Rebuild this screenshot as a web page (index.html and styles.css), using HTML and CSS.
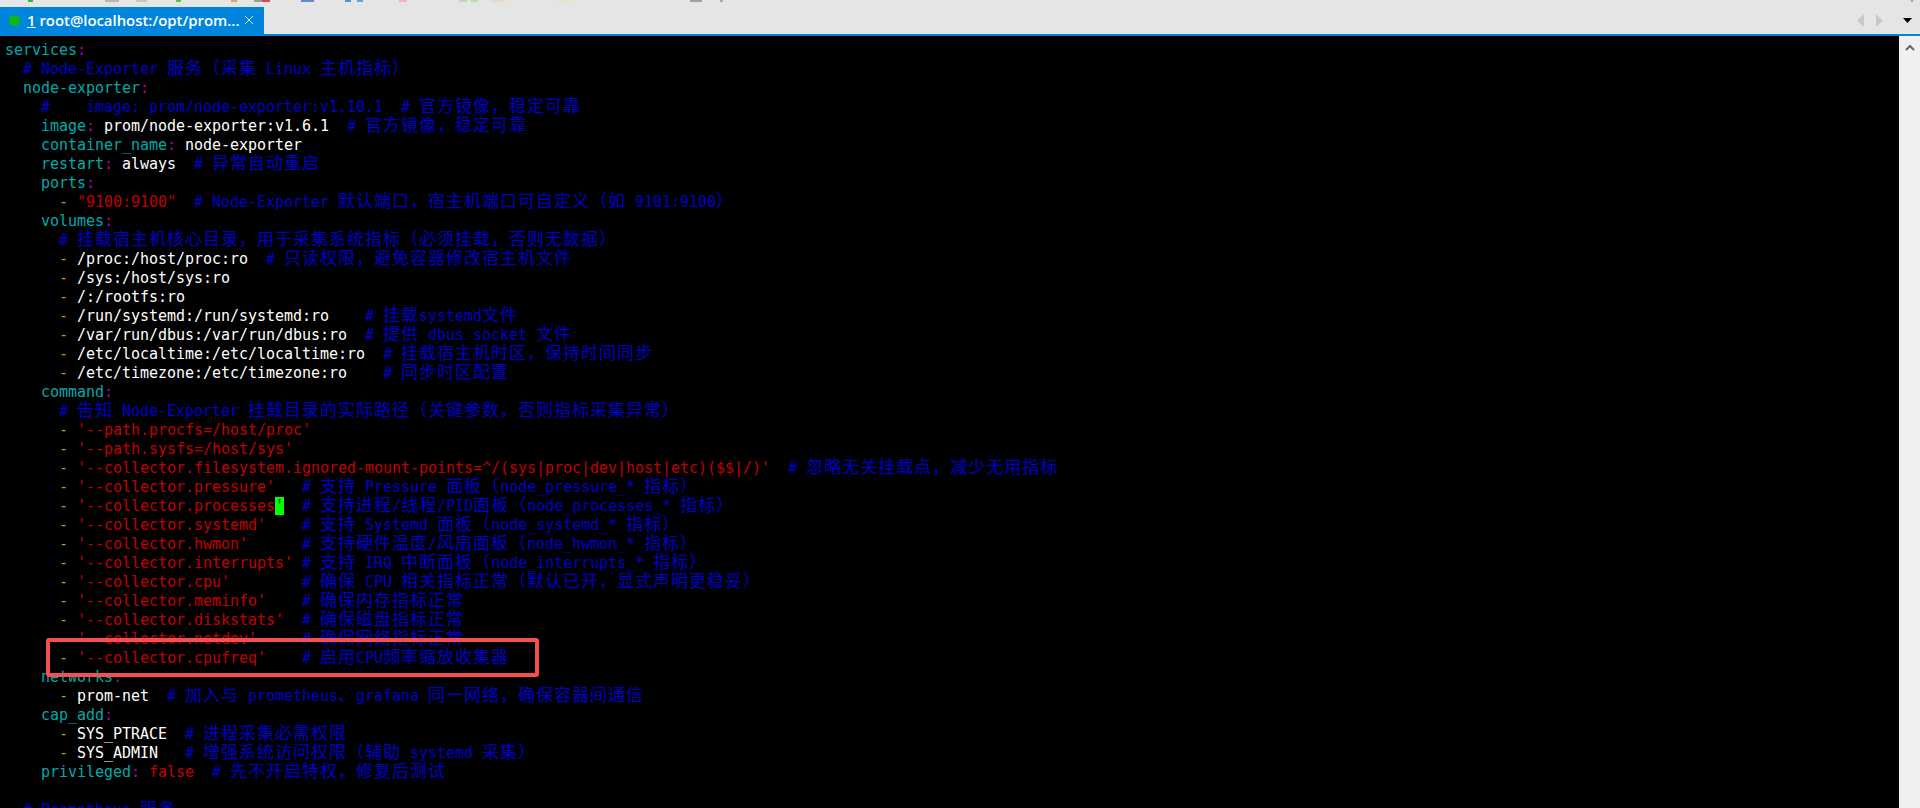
FILE: index.html
```html
<!DOCTYPE html>
<html lang="zh-CN">
<head>
<meta charset="utf-8">
<title>root@localhost:/opt/prometheus</title>
<link rel="stylesheet" href="styles.css">
</head>
<body>
<div class="app">
  <header class="tabbar">
    <svg class="strip" width="1920" height="2" viewBox="0 0 1920 2" aria-hidden="true">
      <rect x="28" width="5" height="2" fill="#35b535"/>
      <rect x="105" width="14" height="2" fill="#b5b5b5"/>
      <rect x="136" width="11" height="2" fill="#c4c4c4"/>
      <rect x="176" width="5" height="2" fill="#5cc04c"/>
      <rect x="231" width="6" height="2" fill="#e2a468"/>
      <rect x="254" width="8" height="2" fill="#9a9a9a"/>
      <rect x="262" width="8" height="2" fill="#d9484c"/>
      <rect x="301" width="13" height="2" fill="#5b8ed0"/>
      <rect x="345" width="6" height="2" fill="#4f92dc"/>
      <rect x="357" width="6" height="2" fill="#6a9edc"/>
      <rect x="399" width="8" height="2" fill="#ecb8b8"/>
      <rect x="459" width="8" height="2" fill="#b4dcb0"/>
      <rect x="471" width="7" height="2" fill="#bcdcb4"/>
      <rect x="490" width="15" height="2" fill="#ecd8c0"/>
      <rect x="554" width="15" height="2" fill="#f0e0c4"/>
      <rect x="690" width="12" height="2" fill="#9aa4b0"/>
      <rect x="720" width="3" height="2" fill="#a8a8b0"/>
      <rect x="1911" width="2" height="2" fill="#a0a0a0"/>
    </svg>
    <div class="tab">
      <span class="dot"></span>
      <span class="tab-title"><u>1</u> root@localhost:/opt/prom...</span>
      <svg class="tab-close" width="10" height="10" viewBox="0 0 10 10" aria-hidden="true"><path d="M1 1l8 8M9 1l-8 8" stroke="#d6ecfa" stroke-width="1" fill="none"/></svg>
    </div>
    <div class="tab-tools">
      <svg width="8" height="13" viewBox="0 0 8 13" aria-hidden="true"><path d="M7 0v13L0 6.5z" fill="#c8c8c8"/></svg>
      <svg width="8" height="13" viewBox="0 0 8 13" aria-hidden="true"><path d="M1 0v13l7-6.500z" fill="#c8c8c8"/></svg>
      <svg class="tool-menu" width="9" height="5" viewBox="0 0 9 5" aria-hidden="true"><path d="M0 0h9L4.500 5z" fill="#000"/></svg>
    </div>
  </header>
  <main class="body">
    <section class="term">
<div class="line"><span class="k">services</span><span class="c">:</span></div>
<div class="line">  <span class="m"># Node-Exporter <span class="z">服务（采集</span> Linux <span class="z">主机指标）</span></span></div>
<div class="line">  <span class="k">node-exporter</span><span class="c">:</span></div>
<div class="line">    <span class="m">#    image: prom/node-exporter:v1.10.1  # <span class="z">官方镜像，稳定可靠</span></span></div>
<div class="line">    <span class="k">image</span><span class="c">:</span> prom/node-exporter:v1.6.1  <span class="m"># <span class="z">官方镜像，稳定可靠</span></span></div>
<div class="line">    <span class="k">container_name</span><span class="c">:</span> node-exporter</div>
<div class="line">    <span class="k">restart</span><span class="c">:</span> always  <span class="m"># <span class="z">异常自动重启</span></span></div>
<div class="line">    <span class="k">ports</span><span class="c">:</span></div>
<div class="line">      <span class="d">-</span> <span class="s">"9100:9100"</span>  <span class="m"># Node-Exporter <span class="z">默认端口，宿主机端口可自定义（如</span> 9101:9100<span class="z">）</span></span></div>
<div class="line">    <span class="k">volumes</span><span class="c">:</span></div>
<div class="line">      <span class="m"># <span class="z">挂载宿主机核心目录，用于采集系统指标（必须挂载，否则无数据）</span></span></div>
<div class="line">      <span class="d">-</span> /proc:/host/proc:ro  <span class="m"># <span class="z">只读权限，避免容器修改宿主机文件</span></span></div>
<div class="line">      <span class="d">-</span> /sys:/host/sys:ro</div>
<div class="line">      <span class="d">-</span> /:/rootfs:ro</div>
<div class="line">      <span class="d">-</span> /run/systemd:/run/systemd:ro    <span class="m"># <span class="z">挂载</span>systemd<span class="z">文件</span></span></div>
<div class="line">      <span class="d">-</span> /var/run/dbus:/var/run/dbus:ro  <span class="m"># <span class="z">提供</span> dbus socket <span class="z">文件</span></span></div>
<div class="line">      <span class="d">-</span> /etc/localtime:/etc/localtime:ro  <span class="m"># <span class="z">挂载宿主机时区，保持时间同步</span></span></div>
<div class="line">      <span class="d">-</span> /etc/timezone:/etc/timezone:ro    <span class="m"># <span class="z">同步时区配置</span></span></div>
<div class="line">    <span class="k">command</span><span class="c">:</span></div>
<div class="line">      <span class="m"># <span class="z">告知</span> Node-Exporter <span class="z">挂载目录的实际路径（关键参数，否则指标采集异常）</span></span></div>
<div class="line">      <span class="d">-</span> <span class="s">'--path.procfs=/host/proc'</span></div>
<div class="line">      <span class="d">-</span> <span class="s">'--path.sysfs=/host/sys'</span></div>
<div class="line">      <span class="d">-</span> <span class="s">'--collector.filesystem.ignored-mount-points=^/(sys|proc|dev|host|etc)($$|/)'</span>  <span class="m"># <span class="z">忽略无关挂载点，减少无用指标</span></span></div>
<div class="line">      <span class="d">-</span> <span class="s">'--collector.pressure'</span>   <span class="m"># <span class="z">支持</span> Pressure <span class="z">面板（</span>node_pressure_* <span class="z">指标）</span></span></div>
<div class="line">      <span class="d">-</span> <span class="s">'--collector.processes</span><span class="cursor">'</span>  <span class="m"># <span class="z">支持进程</span>/<span class="z">线程</span>/PID<span class="z">面板（</span>node_processes_* <span class="z">指标）</span></span></div>
<div class="line">      <span class="d">-</span> <span class="s">'--collector.systemd'</span>    <span class="m"># <span class="z">支持</span> Systemd <span class="z">面板（</span>node_systemd_* <span class="z">指标）</span></span></div>
<div class="line">      <span class="d">-</span> <span class="s">'--collector.hwmon'</span>      <span class="m"># <span class="z">支持硬件温度</span>/<span class="z">风扇面板（</span>node_hwmon_* <span class="z">指标）</span></span></div>
<div class="line">      <span class="d">-</span> <span class="s">'--collector.interrupts'</span> <span class="m"># <span class="z">支持</span> IRQ <span class="z">中断面板（</span>node_interrupts_* <span class="z">指标）</span></span></div>
<div class="line">      <span class="d">-</span> <span class="s">'--collector.cpu'</span>        <span class="m"># <span class="z">确保</span> CPU <span class="z">相关指标正常（默认已开，显式声明更稳妥）</span></span></div>
<div class="line">      <span class="d">-</span> <span class="s">'--collector.meminfo'</span>    <span class="m"># <span class="z">确保内存指标正常</span></span></div>
<div class="line">      <span class="d">-</span> <span class="s">'--collector.diskstats'</span>  <span class="m"># <span class="z">确保磁盘指标正常</span></span></div>
<div class="line">      <span class="d">-</span> <span class="s">'--collector.netdev'</span>     <span class="m"># <span class="z">确保网络指标正常</span></span></div>
<div class="line">      <span class="d">-</span> <span class="s">'--collector.cpufreq'</span>    <span class="m"># <span class="z">启用</span>CPU<span class="z">频率缩放收集器</span></span></div>
<div class="line">    <span class="k">networks</span><span class="c">:</span></div>
<div class="line">      <span class="d">-</span> prom-net  <span class="m"># <span class="z">加入与</span> prometheus<span class="z">、</span>grafana <span class="z">同一网络，确保容器间通信</span></span></div>
<div class="line">    <span class="k">cap_add</span><span class="c">:</span></div>
<div class="line">      <span class="d">-</span> SYS_PTRACE  <span class="m"># <span class="z">进程采集必需权限</span></span></div>
<div class="line">      <span class="d">-</span> SYS_ADMIN   <span class="m"># <span class="z">增强系统访问权限（辅助</span> systemd <span class="z">采集）</span></span></div>
<div class="line">    <span class="k">privileged</span><span class="c">:</span> <span class="s">false</span>  <span class="m"># <span class="z">先不开启特权，修复后测试</span></span></div>
<div class="line"> </div>
<div class="line">  <span class="m"># Prometheus <span class="z">服务</span></span></div>
      <div class="mark"></div>
    </section>
    <aside class="scrollbar">
      <svg width="10" height="7" viewBox="0 0 10 7" aria-hidden="true"><path d="M1 6l4-4 4 4" stroke="#666" stroke-width="2" fill="none"/></svg>
    </aside>
  </main>
</div>
</body>
</html>
```
FILE: styles.css
```css
* { box-sizing: border-box; }
html, body { margin: 0; height: 100%; overflow: hidden; background: #000; }
.app { display: flex; flex-direction: column; height: 808px; }

.tabbar {
  position: relative;
  flex: 0 0 36px;
  display: flex;
  align-items: flex-end;
  justify-content: space-between;
  background: #e5e5e5;
  border-bottom: 2px solid #0085dd;
}
.strip { position: absolute; left: 0; top: 0; }
.tab {
  width: 264px;
  height: 27px;
  display: flex;
  align-items: center;
  padding-left: 9px;
  background: #0085dd;
  color: #fff;
}
.dot { width: 11px; height: 11px; margin-right: 7px; border-radius: 50%; background: #0fb80f; }
.tab-title {
  font: 600 14.9px/27px "Open Sans", sans-serif;
  white-space: pre;
  width: 217px;
}
.tab-close { flex: none; margin-top: -2px; }
.tab-tools { display: flex; align-items: center; height: 27px; padding-right: 8px; gap: 10px; }
.tool-menu { margin-left: 10px; }

.body { flex: 1; display: flex; min-height: 0; }
.term {
  position: relative;
  flex: 1;
  overflow: hidden;
  padding: 5px 0 0 5px;
  background: #000;
  color: #fff;
  font: 15px/19px "DejaVu Sans Mono", monospace;
  letter-spacing: -0.03px;
}
.line { height: 19px; white-space: pre; }
.k { color: #00aaaa; }
.c { color: #aa00aa; }
.m { color: #0000c8; }
.s { color: #c00000; }
.d { color: #aaaa00; }
.z { font-family: "Noto Sans CJK SC", sans-serif; font-size: 17px; line-height: 0; letter-spacing: 1px; }
.cursor { background: #00ff00; color: #222; }
.mark {
  position: absolute;
  left: 46px;
  top: 602px;
  width: 493px;
  height: 39px;
  border: 4px solid #f55050;
  border-radius: 3px;
}

.scrollbar {
  flex: 0 0 21px;
  display: flex;
  justify-content: center;
  padding-top: 8px;
  background: #f0f0f0;
}
```
